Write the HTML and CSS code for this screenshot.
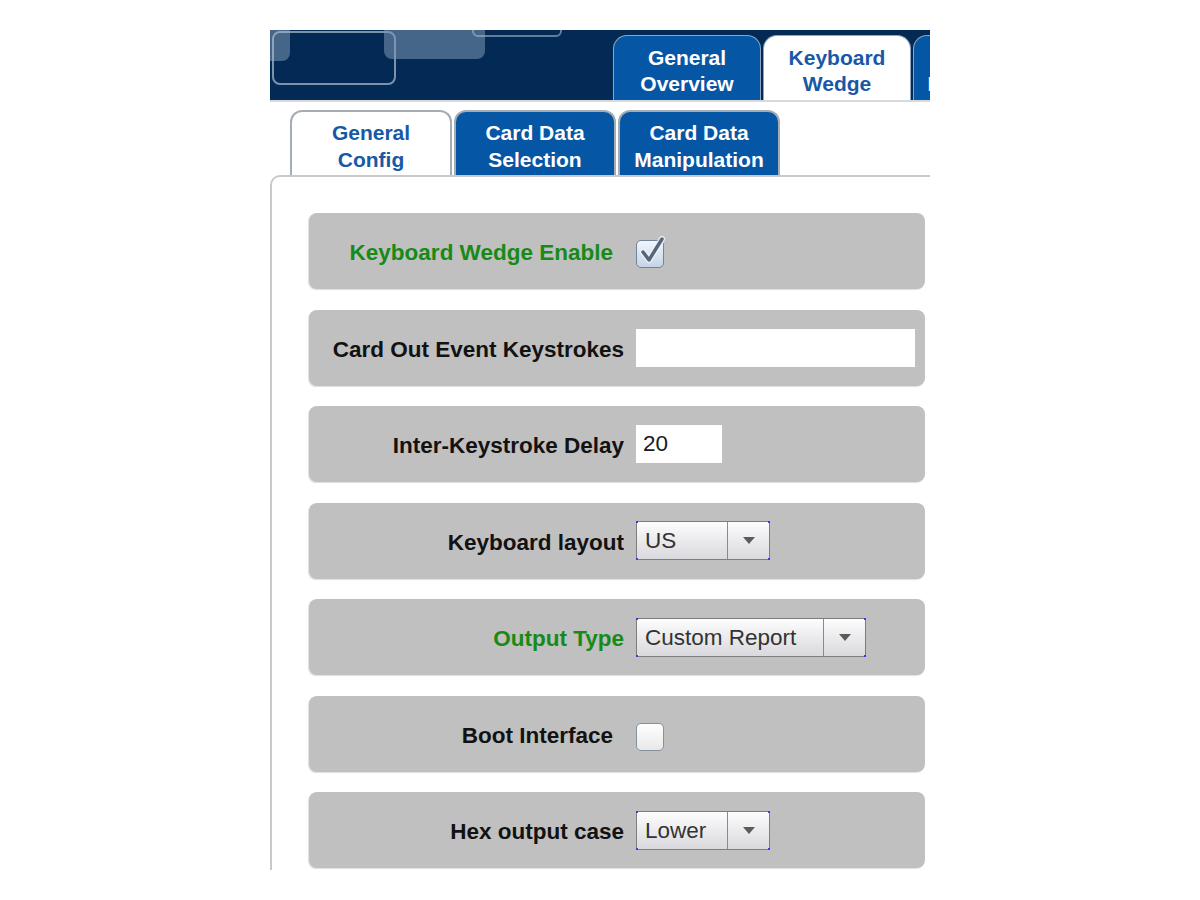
FILE: index.html
```html
<!DOCTYPE html>
<html lang="en">
<head>
  <meta charset="UTF-8">
  <title>Keyboard Wedge - General Config</title>
  <link rel="stylesheet" href="styles.css">
</head>
<body>
  <div class="app">
    <!-- Top banner with the main tabs -->
    <header class="banner">
      <span class="glass glass-a"></span>
      <span class="glass glass-b"></span>
      <span class="glass glass-c"></span>
      <span class="glass glass-d"></span>
      <nav class="main-tabs">
        <a class="tab">General<br>Overview</a>
        <a class="tab active">Keyboard<br>Wedge</a>
        <a class="tab">Advanced<br>Diagnostics</a>
      </nav>
    </header>

    <!-- Sub tabs for the keyboard wedge page -->
    <nav class="sub-tabs">
      <a class="sub-tab active">General<br>Config</a>
      <a class="sub-tab">Card Data<br>Selection</a>
      <a class="sub-tab">Card Data<br>Manipulation</a>
    </nav>

    <section class="panel">
      <div class="row">
        <label class="label green before-check">Keyboard Wedge Enable</label>
        <span class="check on">
          <svg viewBox="0 0 30 30" width="30" height="30">
            <path d="M6 15 L12 23 L25 2" fill="none" stroke="#eef3f8" stroke-width="6" stroke-linecap="round" stroke-linejoin="round"/>
            <path d="M6 15 L12 23 L25 2" fill="none" stroke="#55667c" stroke-width="3.5" stroke-linecap="round" stroke-linejoin="round"/>
          </svg>
        </span>
      </div>

      <div class="row">
        <label class="label">Card Out Event Keystrokes</label>
        <span class="field field-wide"></span>
      </div>

      <div class="row">
        <label class="label">Inter-Keystroke Delay</label>
        <span class="field field-short">20</span>
      </div>

      <div class="row">
        <label class="label">Keyboard layout</label>
        <span class="combo">
          <span class="combo-value short">US</span>
          <span class="combo-btn"><i class="arrow"></i></span>
        </span>
      </div>

      <div class="row">
        <label class="label green">Output Type</label>
        <span class="combo">
          <span class="combo-value long">Custom Report</span>
          <span class="combo-btn"><i class="arrow"></i></span>
        </span>
      </div>

      <div class="row">
        <label class="label before-check">Boot Interface</label>
        <span class="check"></span>
      </div>

      <div class="row">
        <label class="label">Hex output case</label>
        <span class="combo">
          <span class="combo-value short">Lower</span>
          <span class="combo-btn"><i class="arrow"></i></span>
        </span>
      </div>
    </section>
  </div>
</body>
</html>
```

FILE: styles.css
```css
/* Config window: fixed frame, content clipped on the right */
body {
  margin: 0;
  background-color: #fff;
  font-family: "Liberation Sans", Arial, sans-serif;
}
.app {
  width: 660px;
  height: 840px;
  margin: 30px 0 0 270px;
  overflow: hidden;
  background-color: #fff;
}

/* Banner */
.banner {
  position: relative;
  height: 70px;
  background-color: #022a54;
  border-bottom: 2px solid #d6d9de;
  overflow: hidden;
}
.glass {
  position: absolute;
  border-radius: 8px;
}
.glass-a {
  left: -20px;
  top: -10px;
  width: 40px;
  height: 41px;
  background-color: rgba(125, 150, 180, 0.55);
}
.glass-b {
  left: 2px;
  top: 1px;
  width: 120px;
  height: 50px;
  border: 2px solid rgba(165, 183, 204, 0.75);
}
.glass-c {
  left: 114px;
  top: -10px;
  width: 101px;
  height: 39px;
  background-color: rgba(125, 150, 180, 0.55);
}
.glass-d {
  left: 202px;
  top: -10px;
  width: 86px;
  height: 13px;
  border: 2px solid rgba(165, 183, 204, 0.6);
  border-radius: 6px;
}
.main-tabs {
  position: relative;
  display: flex;
  align-items: flex-end;
  gap: 2px;
  height: 70px;
  padding-left: 343px;
}
.tab {
  flex: none;
  box-sizing: border-box;
  width: 148px;
  height: 65px;
  padding-top: 9px;
  border: 1px solid #8fa4be;
  border-bottom: 0;
  border-radius: 14px 14px 0 0;
  background-color: #0656a6;
  color: #fff;
  font-size: 21px;
  font-weight: bold;
  line-height: 26px;
  text-align: center;
}
.tab.active {
  background-color: #fff;
  color: #1858a6;
}

/* Sub tabs */
.sub-tabs {
  display: flex;
  align-items: flex-end;
  gap: 2px;
  height: 73px;
  padding-left: 20px;
}
.sub-tab {
  flex: none;
  box-sizing: border-box;
  width: 162px;
  height: 65px;
  padding-top: 7px;
  border: 2px solid #a4acb6;
  border-bottom: 0;
  border-radius: 12px 12px 0 0;
  background-color: #0656a6;
  color: #fff;
  font-size: 21px;
  font-weight: bold;
  line-height: 27px;
  text-align: center;
}
.sub-tab.active {
  background-color: #fff;
  color: #1858a6;
}

/* Settings panel */
.panel {
  display: flex;
  flex-direction: column;
  gap: 20.5px;
  height: 100%;
  padding: 36px 5px 0 37px;
  border-top: 2px solid #c9c9c9;
  border-left: 2px solid #c9c9c9;
  border-top-left-radius: 10px;
}
.row {
  flex: none;
  display: flex;
  align-items: center;
  height: 76px;
  background-color: #c0c0c0;
  border-radius: 8px;
  box-shadow: -1px 1px 1px rgba(0, 0, 0, 0.13);
}
.label {
  box-sizing: border-box;
  width: 327px;
  padding-top: 4px;
  padding-right: 12px;
  text-align: right;
  color: #121212;
  font-size: 22.5px;
  font-weight: bold;
}
.label.green {
  color: #178a17;
}
.label.before-check {
  padding-right: 23px;
}

/* Inputs */
.field {
  box-sizing: border-box;
  display: flex;
  align-items: center;
  height: 38px;
  padding-left: 7px;
  background-color: #fff;
  color: #1a1a1a;
  font-size: 22.5px;
}
.field-wide {
  width: 279px;
}
.field-short {
  width: 86px;
}

.combo {
  position: relative;
  box-sizing: border-box;
  display: flex;
  height: 39px;
  border: 1px solid #7d7d7d;
  background: linear-gradient(#fdfdfd, #d9d9de);
}
.combo::before {
  content: "";
  position: absolute;
  inset: -1px;
  background:
    linear-gradient(#3b3be8, #3b3be8) left top / 2px 2px no-repeat,
    linear-gradient(#3b3be8, #3b3be8) right top / 2px 2px no-repeat,
    linear-gradient(#3b3be8, #3b3be8) left bottom / 2px 2px no-repeat,
    linear-gradient(#3b3be8, #3b3be8) right bottom / 2px 2px no-repeat;
}
.combo-value {
  box-sizing: border-box;
  padding-left: 8px;
  border-right: 1px solid #8a8a8a;
  color: #333;
  font-size: 22.5px;
  line-height: 37px;
}
.combo-value.short {
  width: 91px;
}
.combo-value.long {
  width: 187px;
}
.combo-btn {
  display: flex;
  align-items: center;
  justify-content: center;
  width: 41px;
}
.arrow {
  width: 0;
  height: 0;
  border-left: 6px solid transparent;
  border-right: 6px solid transparent;
  border-top: 7px solid #5b5b5b;
}

.check {
  position: relative;
  box-sizing: border-box;
  width: 28px;
  height: 28px;
  margin-top: 6px;
  border: 1px solid #86919e;
  border-radius: 5px;
  background: linear-gradient(#ffffff, #e8e8e8);
}
.check.on {
  border-color: #72849a;
  background: linear-gradient(#f1f6fb, #c4d4e6);
}
.check svg {
  position: absolute;
  left: 0;
  top: -4px;
  overflow: visible;
}
```
